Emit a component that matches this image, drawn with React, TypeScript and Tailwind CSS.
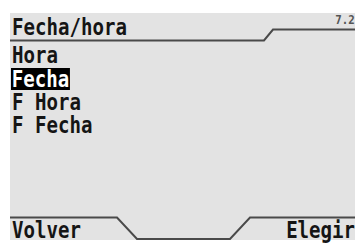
import React from "react";

export default function App() {
  const mono = { fontFamily: '"DejaVu Sans Mono", "Liberation Mono", monospace' };
  return (
    <div className="w-[359px] h-[248px] bg-white pt-[13px] pl-[10px]" style={mono}>
      <div className="relative w-[345px] h-[227px] bg-[#e3e3e3] flex flex-col text-[#151515]">
        <svg className="absolute inset-0" width="345" height="227" viewBox="0 0 345 227">
          <path d="M0 27.5 H254 L263 16.5 H345" fill="none" stroke="#4a4a4a" strokeWidth="2" />
          <path d="M0 204.5 H107 L127 226 H220 L240 204.5 H345" fill="none" stroke="#4a4a4a" strokeWidth="2" />
        </svg>
        <div className="relative flex items-start justify-between h-[27px]">
          <span className="ml-[2px] mt-[3px] text-[23px] leading-[23px] font-bold origin-left scale-x-[0.83] whitespace-pre">Fecha/hora</span>
          <span className="mt-[1px] text-[12px] leading-[13px] font-bold text-[#555] origin-right scale-x-[0.9]">7.2</span>
        </div>
        <div className="relative flex flex-col items-start pt-[4px] text-[23px] font-bold">
          <div className="h-[23px] leading-[23px] ml-[2px] origin-left scale-x-[0.83] whitespace-pre">Hora</div>
          <div className="h-[24px] flex items-center">
            <div className="ml-[1px] origin-left scale-x-[0.83] whitespace-pre bg-black text-white h-[22px] leading-[22px] px-[1px]">Fecha</div>
          </div>
          <div className="h-[23px] leading-[23px] ml-[2px] origin-left scale-x-[0.83] whitespace-pre">F Hora</div>
          <div className="h-[23px] leading-[23px] ml-[2px] origin-left scale-x-[0.83] whitespace-pre">F Fecha</div>
        </div>
        <div className="relative mt-auto flex justify-between items-end h-[22px] text-[23px] leading-[22px] font-bold translate-y-[1px]">
          <span className="ml-[2px] origin-left scale-x-[0.83] whitespace-pre">Volver</span>
          <span className="origin-right scale-x-[0.83] whitespace-pre">Elegir</span>
        </div>
      </div>
    </div>
  );
}
